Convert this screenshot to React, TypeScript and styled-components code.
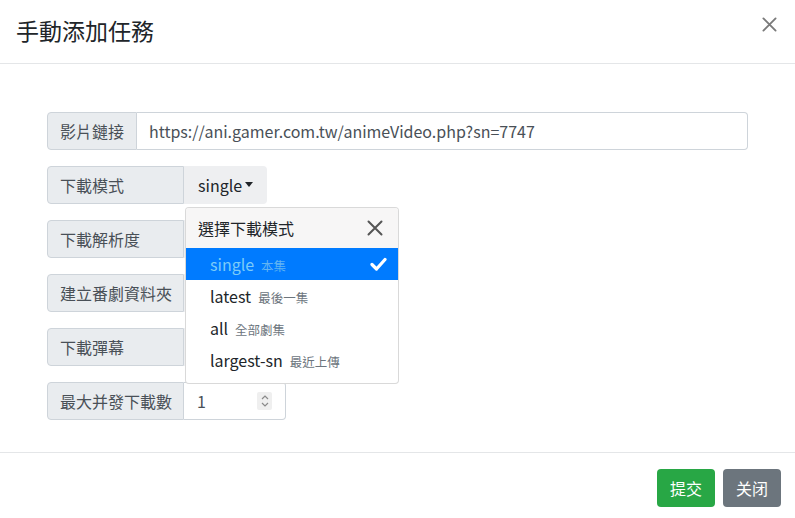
import React from "react";
import styled, { createGlobalStyle } from "styled-components";

const GlobalStyle = createGlobalStyle`
	* { box-sizing: border-box; }
	body {
		margin: 0;
		background: #ffffff;
		font-family: "Noto Sans CJK TC", "Noto Sans", sans-serif;
		color: #212529;
		font-size: 16px;
	}
`;

const modes = [
	{ name: "single", desc: "本集" },
	{ name: "latest", desc: "最後一集" },
	{ name: "all", desc: "全部劇集" },
	{ name: "largest-sn", desc: "最近上傳" }
];

const CrossIcon = ({ size, color }: any) => (
	<svg width={size} height={size} viewBox="0 0 16 16">
		<path d="M1.5 1.5 L14.5 14.5 M14.5 1.5 L1.5 14.5" stroke={color} strokeWidth="2" strokeLinecap="round" />
	</svg>
);

export default function App() {
	return (
		<Modal>
			<GlobalStyle />
			<Header>
				<Title>手動添加任務</Title>
				<CloseButton>
					<CrossIcon size={15} color="#7a7a7a" />
				</CloseButton>
			</Header>
			<Body>
				<Group>
					<Label>影片鏈接</Label>
					<TextInput readOnly value="https://ani.gamer.com.tw/animeVideo.php?sn=7747" />
				</Group>
				<Group>
					<Label $fixed>下載模式</Label>
					<SelectWrap>
						<SelectToggle>
							single<Caret />
						</SelectToggle>
						<Menu>
							<MenuHeader>
								<span>選擇下載模式</span>
								<CrossIcon size={16} color="#555" />
							</MenuHeader>
							{modes.map((m, i) => (
								<MenuItem key={m.name} $active={i === 0}>
									<span>
										{m.name}
										<Sub $active={i === 0}>{m.desc}</Sub>
									</span>
									{i === 0 ? (
										<svg width="17" height="14" viewBox="0 0 17 14">
											<path d="M2 7.5 L6.5 12 L15 2.5" stroke="#fff" strokeWidth="3.2" fill="none" strokeLinecap="round" strokeLinejoin="round" />
										</svg>
									) : null}
								</MenuItem>
							))}
						</Menu>
					</SelectWrap>
				</Group>
				{/* these rows' selects sit under the open menu */}
				<Group>
					<Label $fixed>下載解析度</Label>
					<SelectToggle />
				</Group>
				<Group>
					<Label $fixed>建立番劇資料夾</Label>
					<SelectToggle />
				</Group>
				<Group>
					<Label $fixed>下載彈幕</Label>
					<SelectToggle />
				</Group>
				<Group>
					<Label $fixed>最大并發下載數</Label>
					<NumberBox>
						<span>1</span>
						<Spinner>
							<svg width="10" height="16" viewBox="0 0 10 16">
								<path d="M2 6 L5 3 L8 6 M2 10 L5 13 L8 10" stroke="#8a8a8a" strokeWidth="1.2" fill="none" />
							</svg>
						</Spinner>
					</NumberBox>
				</Group>
			</Body>
			<Footer>
				<Button $color="#28a745">提交</Button>
				<Button $color="#6c757d">关闭</Button>
			</Footer>
		</Modal>
	);
}

const Modal = styled.div({
	width: "795px",
	height: "518px",
	background: "#fff",
	display: "flex",
	flexDirection: "column"
});

const Header = styled.div({
	display: "flex",
	alignItems: "center",
	justifyContent: "space-between",
	height: "64px",
	padding: "0 18px 2px 16px",
	borderBottom: "1px solid #e4e6e8"
});

const Title = styled.h4({
	margin: 0,
	fontSize: "23px",
	fontWeight: 400,
	lineHeight: "31px",
	color: "#212529"
});

const CloseButton = styled.div({
	display: "flex",
	marginTop: "-12px"
});

const Body = styled.div({
	flex: 1,
	padding: "48px 47px 0 47px",
	display: "flex",
	flexDirection: "column",
	gap: "16px"
});

const Group = styled.div({
	display: "flex",
	height: "38px"
});

const Label = styled.div<{ $fixed?: boolean }>(({ $fixed }) => ({
	display: "flex",
	alignItems: "center",
	width: $fixed ? "137px" : "auto",
	padding: "0 12px",
	background: "#e9ecef",
	border: "1px solid #ced4da",
	borderRadius: "4px 0 0 4px",
	color: "#495057",
	whiteSpace: "nowrap"
}));

const TextInput = styled.input({
	flex: 1,
	border: "1px solid #ced4da",
	borderLeft: "none",
	borderRadius: "0 4px 4px 0",
	padding: "0 12px",
	font: "inherit",
	fontSize: "16px",
	color: "#495057",
	outline: "none"
});

const SelectWrap = styled.div({
	position: "relative",
	display: "flex"
});

const SelectToggle = styled.div({
	display: "flex",
	alignItems: "center",
	minWidth: "60px",
	padding: "0 14px 0 14px",
	background: "#eeeff1",
	borderRadius: "0 4px 4px 0",
	color: "#212529",
	fontSize: "16px"
});

const Caret = styled.span({
	display: "inline-block",
	marginLeft: "3px",
	marginTop: "-2px",
	borderTop: "5px solid #212529",
	borderLeft: "4px solid transparent",
	borderRight: "4px solid transparent"
});

const Menu = styled.div({
	position: "absolute",
	top: "41px",
	left: "1px",
	width: "214px",
	background: "#fff",
	border: "1px solid rgba(0,0,0,0.15)",
	borderRadius: "4px",
	paddingBottom: "7px",
	zIndex: 10,
	overflow: "hidden"
});

const MenuHeader = styled.div({
	display: "flex",
	alignItems: "center",
	justifyContent: "space-between",
	height: "40px",
	padding: "0 15px 0 12px",
	background: "#f7f6f6",
	fontSize: "16px",
	color: "#212529"
});

const MenuItem = styled.div<{ $active?: boolean }>(({ $active }) => ({
	display: "flex",
	alignItems: "center",
	justifyContent: "space-between",
	height: "32px",
	padding: "0 11px 0 24px",
	background: $active ? "#007bff" : "transparent",
	color: $active ? "#7ccbf8" : "#212529",
	fontSize: "16px"
}));

const Sub = styled.small<{ $active?: boolean }>(({ $active }) => ({
	marginLeft: "7px",
	fontSize: "12.5px",
	color: $active ? "#62b4f2" : "#6c757d"
}));

const NumberBox = styled.div({
	display: "flex",
	alignItems: "center",
	justifyContent: "space-between",
	width: "102px",
	padding: "0 13px 0 13px",
	border: "1px solid #ced4da",
	borderLeft: "none",
	borderRadius: "0 4px 4px 0",
	color: "#495057"
});

const Spinner = styled.span({
	display: "flex",
	alignItems: "center",
	justifyContent: "center",
	width: "15px",
	height: "18px",
	background: "#efefef",
	borderRadius: "2px"
});

const Footer = styled.div({
	display: "flex",
	justifyContent: "flex-end",
	gap: "8px",
	height: "66px",
	padding: "16px 14px 0 0",
	borderTop: "1px solid #e4e6e8"
});

const Button = styled.div<{ $color: string }>(({ $color }) => ({
	display: "flex",
	alignItems: "center",
	justifyContent: "center",
	width: "58px",
	height: "38px",
	background: $color,
	color: "#fff",
	borderRadius: "4px",
	fontSize: "16px"
}));
